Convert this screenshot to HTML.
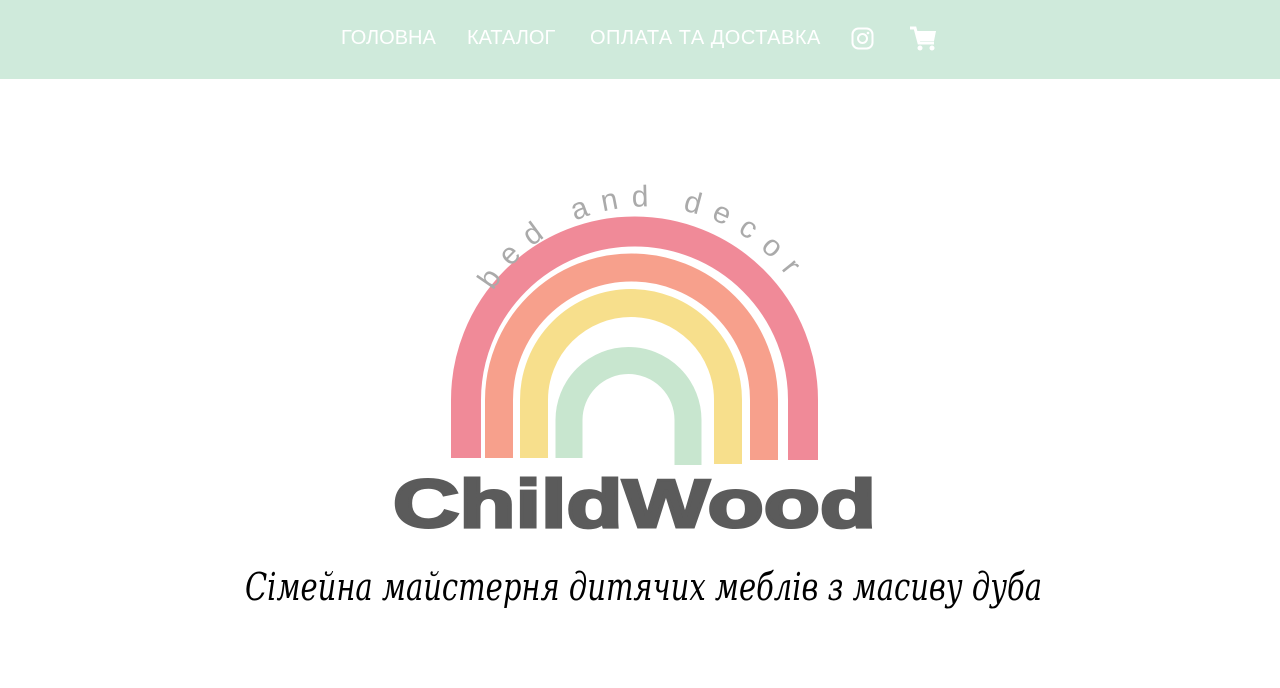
<!DOCTYPE html>
<html><head><meta charset="utf-8"><style>
body{margin:0;width:1280px;height:688px;background:#fff;overflow:hidden;font-family:"Liberation Sans",sans-serif}
.nav{position:absolute;left:0;top:0;width:1280px;height:79px;background:#cfeadb}
.nav span{position:absolute;top:27px;color:#fff;font-size:20px;white-space:nowrap}
</style></head><body>
<div class="nav">
<span style="left:341px">ГОЛОВНА</span>
<span style="left:467px">КАТАЛОГ</span>
<span style="left:590px;letter-spacing:0.5px">ОПЛАТА ТА ДОСТАВКА</span>
<svg style="position:absolute;left:851px;top:27px" width="23" height="23" viewBox="0 0 23 23"><rect x="1.5" y="1.5" width="20" height="20" rx="6" fill="none" stroke="#fff" stroke-width="2"/><circle cx="11.5" cy="11.5" r="4.5" fill="none" stroke="#fff" stroke-width="2"/><circle cx="17" cy="6" r="1.3" fill="#fff"/></svg>
<svg style="position:absolute;left:909px;top:26px" width="28" height="26" viewBox="0 0 28 26"><path d="M1 2h5l4 15h15" fill="none" stroke="#fff" stroke-width="3"/><path d="M7 5h20l-2 10H10z" fill="#fff"/><circle cx="11" cy="22" r="2.5" fill="#fff"/><circle cx="23" cy="22" r="2.5" fill="#fff"/></svg>
</div>
<svg style="position:absolute;left:0;top:0" width="1280" height="688">
<g fill="none" stroke-linecap="butt">
<path d="M466 458 V400 A168 168 0 0 1 803 400 V460" stroke="#f08a98" stroke-width="30"/>
<path d="M499 458 V400 A132 132 0 0 1 764 400 V460" stroke="#f7a08c" stroke-width="28"/>
<path d="M534 458 V400 A97 97 0 0 1 728 400 V464" stroke="#f7df8c" stroke-width="28"/>
<path d="M569 458 V420 A59 59 0 0 1 688 420 V465" stroke="#c8e6cf" stroke-width="27"/>
</g>
<path id="arc" d="M490 296 A179 179 0 0 1 800 296" fill="none"/>
<text font-family="Liberation Sans,sans-serif" font-size="30" fill="#aaa"><textPath href="#arc" startOffset="6" textLength="345">bed and decor</textPath></text>
<text x="393" y="527" font-family="Liberation Sans,sans-serif" font-weight="bold" font-size="68" fill="#5b5b5b" stroke="#5b5b5b" stroke-width="3" textLength="483" lengthAdjust="spacingAndGlyphs">ChildWood</text>
<text x="245" y="600" font-family="DejaVu Serif,serif" font-style="italic" font-size="38" fill="#000" textLength="797" lengthAdjust="spacingAndGlyphs">Сімейна майстерня дитячих меблів з масиву дуба</text>
</svg>
</body></html>
